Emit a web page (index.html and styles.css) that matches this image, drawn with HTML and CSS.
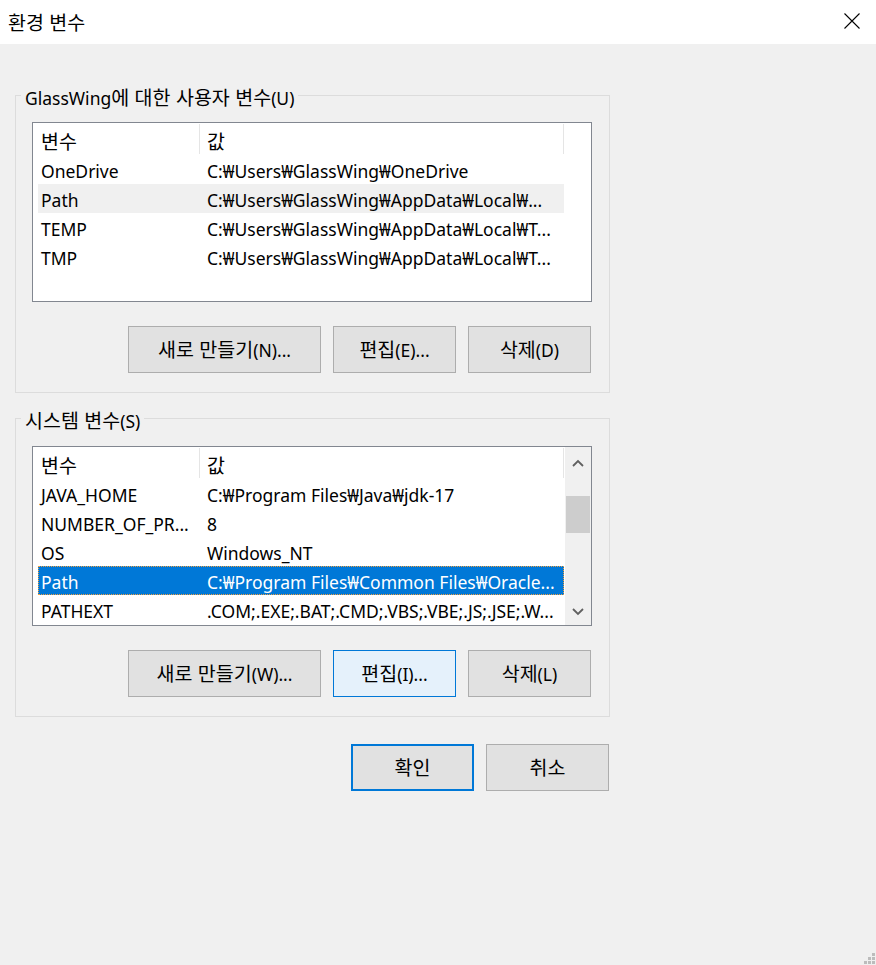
FILE: index.html
```html
<!DOCTYPE html>
<html lang="ko">
<head>
<meta charset="utf-8">
<title>환경 변수</title>
<link rel="stylesheet" href="styles.css">
</head>
<body>
<div class="window">
  <div class="titlebar">
    <span class="title ko">환경 변수</span>
    <svg class="close" width="16" height="16" viewBox="0 0 16 16"><path d="M0.5 0.5 L15.5 15.5 M15.5 0.5 L0.5 15.5" stroke="#000" stroke-width="1.1" fill="none"/></svg>
  </div>
  <div class="content">
    <fieldset class="group">
      <legend>GlassWing<span class="ko">에 대한 사용자 변수</span>(U)</legend>
      <div class="group-body">
        <div class="list">
          <div class="list-body">
            <div class="header"><div class="hcell c1"><span class="ko">변수</span></div><div class="hcell c2"><span class="ko">값</span></div></div>
            <div class="row"><span class="cell c1">OneDrive</span><span class="cell c2">C:₩Users₩GlassWing₩OneDrive</span></div>
            <div class="row hover"><span class="cell c1">Path</span><span class="cell c2">C:₩Users₩GlassWing₩AppData₩Local₩...</span></div>
            <div class="row"><span class="cell c1">TEMP</span><span class="cell c2">C:₩Users₩GlassWing₩AppData₩Local₩T...</span></div>
            <div class="row"><span class="cell c1">TMP</span><span class="cell c2">C:₩Users₩GlassWing₩AppData₩Local₩T...</span></div>
          </div>
        </div>
        <div class="buttons">
          <button class="btn wide"><span class="ko">새로 만들기</span>(N)...</button>
          <button class="btn"><span class="ko">편집</span>(E)...</button>
          <button class="btn"><span class="ko">삭제</span>(D)</button>
        </div>
      </div>
    </fieldset>

    <fieldset class="group second">
      <legend><span class="ko">시스템 변수</span>(S)</legend>
      <div class="group-body">
        <div class="list">
          <div class="list-body">
            <div class="header"><div class="hcell c1"><span class="ko">변수</span></div><div class="hcell c2"><span class="ko">값</span></div></div>
            <div class="row"><span class="cell c1">JAVA_HOME</span><span class="cell c2">C:₩Program Files₩Java₩jdk-17</span></div>
            <div class="row"><span class="cell c1">NUMBER_OF_PR...</span><span class="cell c2">8</span></div>
            <div class="row"><span class="cell c1">OS</span><span class="cell c2">Windows_NT</span></div>
            <div class="row selected"><span class="cell c1">Path</span><span class="cell c2">C:₩Program Files₩Common Files₩Oracle...</span></div>
            <div class="row"><span class="cell c1">PATHEXT</span><span class="cell c2">.COM;.EXE;.BAT;.CMD;.VBS;.VBE;.JS;.JSE;.W...</span></div>
          </div>
          <div class="scrollbar">
            <div class="arrow up"><svg width="12" height="8" viewBox="0 0 12 8"><path d="M1 7 L6 2 L11 7" stroke="#606060" stroke-width="1.8" fill="none"/></svg></div>
            <div class="track"><div class="thumb"></div></div>
            <div class="arrow down"><svg width="12" height="8" viewBox="0 0 12 8"><path d="M1 1 L6 6 L11 1" stroke="#606060" stroke-width="1.8" fill="none"/></svg></div>
          </div>
        </div>
        <div class="buttons">
          <button class="btn wide"><span class="ko">새로 만들기</span>(W)...</button>
          <button class="btn focused"><span class="ko">편집</span>(I)...</button>
          <button class="btn"><span class="ko">삭제</span>(L)</button>
        </div>
      </div>
    </fieldset>

    <div class="dialog-buttons">
      <button class="btn default"><span class="ko">확인</span></button>
      <button class="btn"><span class="ko">취소</span></button>
    </div>
  </div>
  <svg class="grip" width="12" height="12" viewBox="0 0 12 12">
    <rect x="8" y="0" width="3" height="3" fill="#bcbcbc"/>
    <rect x="4" y="4" width="3" height="3" fill="#bcbcbc"/>
    <rect x="8" y="4" width="3" height="3" fill="#bcbcbc"/>
    <rect x="0" y="8" width="3" height="3" fill="#bcbcbc"/>
    <rect x="4" y="8" width="3" height="3" fill="#bcbcbc"/>
    <rect x="8" y="8" width="3" height="3" fill="#bcbcbc"/>
  </svg>
</div>
</body>
</html>
```

FILE: styles.css
```css
* { box-sizing: border-box; }

html, body {
  margin: 0;
  padding: 0;
}

body {
  background: #f0f0f0;
  font-family: "Noto Sans", "Noto Sans CJK KR", sans-serif;
  font-size: 17.5px;
  color: #000;
}

.ko {
  font-family: "Noto Sans CJK KR", sans-serif;
  font-size: 19.5px;
}

.window {
  position: relative;
  width: 876px;
  height: 965px;
  background: #f0f0f0;
  overflow: hidden;
}

.titlebar {
  height: 44px;
  background: #fff;
  display: flex;
  align-items: center;
  justify-content: space-between;
  padding: 0 16px 0 8px;
}

.title {
  line-height: 24px;
}

.close {
  display: block;
  margin-top: -2px;
}

.content {
  padding: 38px 0 0 15px;
  width: 610px;
}

.group {
  margin: 0;
  padding: 0;
  width: 595px;
  border: 1px solid #dcdcdc;
  min-inline-size: 0;
}

.group.second {
  margin-top: 12px;
}

.group legend {
  margin-left: 5px;
  padding: 3px 4px 0;
  line-height: 23px;
  height: 26px;
}

.group-body {
  padding: 14px 17px 19px 16px;
}

.group.second .group-body {
  padding-top: 15px;
}

.list {
  height: 180px;
  border: 1px solid #828790;
  background: #fff;
  display: flex;
}

.list-body {
  flex: 1;
  min-width: 0;
}

.header {
  height: 32px;
  display: grid;
  grid-template-columns: 167px 364px;
}

.hcell {
  border-right: 1px solid #e5e5e5;
  margin-top: 1px;
  height: 30px;
  padding-top: 3px;
  line-height: 27px;
  white-space: nowrap;
}

.hcell.c1 { padding-left: 8px; }
.hcell.c2 { padding-left: 7px; }

.row {
  margin-left: 5px;
  width: 526px;
  height: 29px;
  display: grid;
  grid-template-columns: 162px 364px;
}

.cell {
  white-space: nowrap;
  overflow: hidden;
  padding-top: 3px;
  line-height: 26px;
}

.cell.c1 { padding-left: 3px; }
.cell.c2 { padding-left: 7px; }

.row.hover {
  background: #f0f0f0;
}

.row.selected {
  background: #0078d7;
  color: #fff;
  outline: 1px dotted #f0a040;
  outline-offset: -1px;
}

.scrollbar {
  width: 26px;
  background: #f0f0f0;
  display: flex;
  flex-direction: column;
}

.arrow {
  height: 30px;
  display: flex;
  justify-content: center;
  align-items: center;
}

.arrow svg { display: block; }

.arrow.up { padding-top: 2px; }
.arrow.down { padding-top: 4px; }

.track {
  flex: 1;
  padding: 19px 1px 0 1px;
}

.thumb {
  height: 37px;
  background: #cdcdcd;
}

.buttons {
  margin-top: 24px;
  margin-right: 1px;
  display: flex;
  justify-content: flex-end;
  gap: 12px;
}

.btn {
  width: 123px;
  height: 47px;
  background: #e1e1e1;
  border: 1px solid #adadad;
  font-family: "Noto Sans", "Noto Sans CJK KR", sans-serif;
  font-size: 17.5px;
  line-height: 24px;
  color: #000;
  padding: 0;
  margin: 0;
  border-radius: 0;
}

.btn.wide { width: 193px; }

.btn.focused {
  background: #e5f1fb;
  border-color: #0078d7;
}

.btn.default {
  border: 2px solid #0078d7;
}

.dialog-buttons {
  margin-top: 27px;
  display: flex;
  justify-content: flex-end;
  gap: 12px;
  padding-right: 1px;
  width: 595px;
}

.grip {
  position: absolute;
  left: 864px;
  top: 953px;
}
```
